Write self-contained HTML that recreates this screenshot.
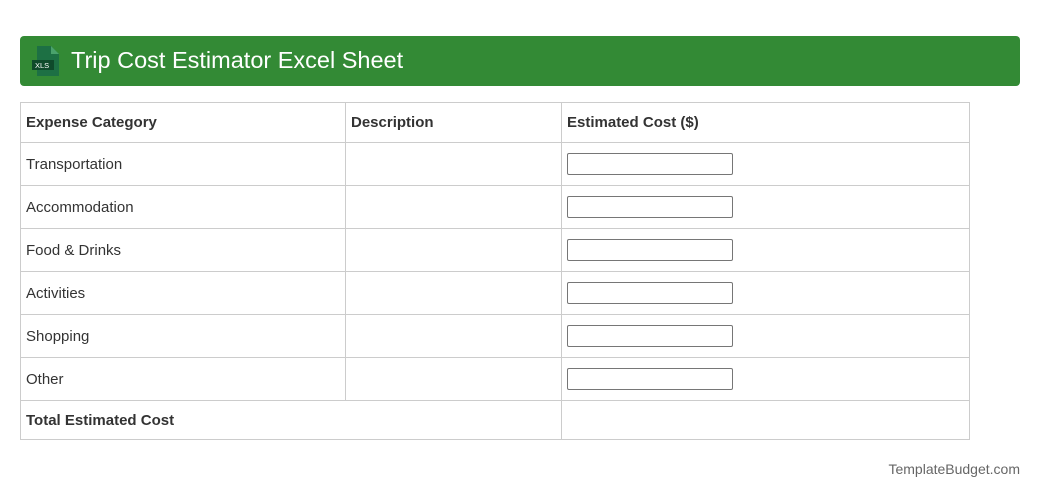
<!DOCTYPE html>
<html><head><style>
body{margin:0;background:#fff;font-family:"Liberation Sans",Arial,sans-serif;color:#333;width:1040px;height:498px;position:relative}
.hdr{position:absolute;left:20px;top:36px;width:1000px;height:50px;background:#338a35;border-radius:4px}
.hdr span{position:absolute;left:51px;top:11px;color:#fff;font-size:23.5px}
.ic{position:absolute;left:11px;top:9px}
table{position:absolute;left:20px;top:102px;border-collapse:collapse;width:950px;font-size:15px}
td{border:1px solid #ccc;height:43px;padding:0 5px;box-sizing:border-box}
tr:first-child td{height:40px;font-weight:bold}
.in{display:inline-block;width:164px;height:20px;border:1px solid #767676;border-radius:2px;vertical-align:middle}
.ft{position:absolute;right:20px;top:461px;font-size:14px;color:#666}
</style></head><body>
<div class="hdr"><svg class="ic" width="30" height="32" viewBox="0 0 30 32"><path d="M6 1h14l8 8v22H6z" fill="#1d7044"/><path d="M20 1v8h8z" fill="#4aa26c"/><rect x="1" y="15" width="22" height="10" fill="#0f4a2b"/><text x="4" y="23" font-size="7.5" fill="#fff" font-family="Liberation Sans">XLS</text></svg><span>Trip Cost Estimator Excel Sheet</span></div>
<table>
<tr><td style="width:325px">Expense Category</td><td style="width:216px">Description</td><td>Estimated Cost ($)</td></tr>
<tr><td>Transportation</td><td></td><td><span class="in"></span></td></tr>
<tr><td>Accommodation</td><td></td><td><span class="in"></span></td></tr>
<tr><td>Food &amp; Drinks</td><td></td><td><span class="in"></span></td></tr>
<tr><td>Activities</td><td></td><td><span class="in"></span></td></tr>
<tr><td>Shopping</td><td></td><td><span class="in"></span></td></tr>
<tr><td>Other</td><td></td><td><span class="in"></span></td></tr>
<tr><td colspan="2" style="font-weight:bold;height:39px">Total Estimated Cost</td><td style="height:39px"></td></tr>
</table>
<div class="ft">TemplateBudget.com</div>
</body></html>
